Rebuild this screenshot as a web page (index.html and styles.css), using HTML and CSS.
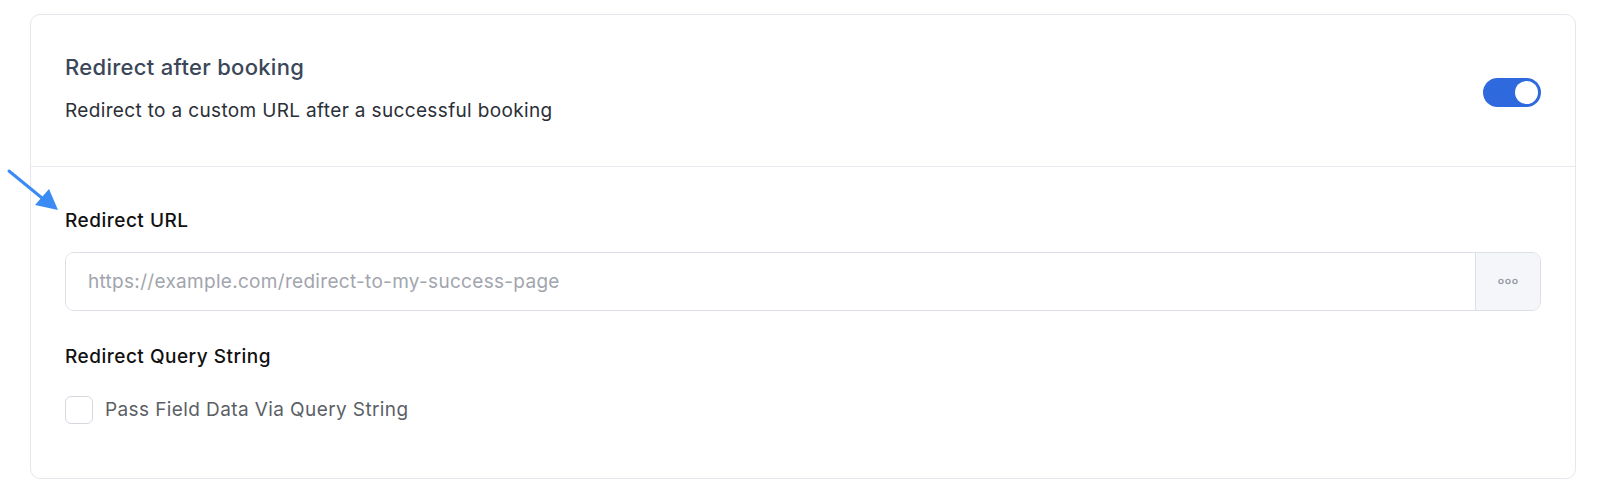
FILE: index.html
```html
<!DOCTYPE html>
<html lang="en">
<head>
    <meta charset="UTF-8">
    <meta name="viewport" content="width=device-width, initial-scale=1.0">
    <title>Redirect after booking</title>
    <link rel="stylesheet" href="styles.css">
</head>
<body>

    <svg class="pointer-arrow" width="70" height="60" viewBox="0 0 70 60">
        <line x1="9" y1="11" x2="42" y2="38" stroke="#3a8cf4" stroke-width="3" stroke-linecap="round"/>
        <polygon points="58,50 35,45 49,29" fill="#3a8cf4"/>
    </svg>

    <div class="card">
        <div class="card-head">
            <div>
                <h2 class="title">Redirect after booking</h2>
                <p class="subtitle">Redirect to a custom URL after a successful booking</p>
            </div>
            <label class="toggle">
                <input type="checkbox" checked>
                <span class="knob"></span>
            </label>
        </div>

        <div class="card-body">
            <div class="field-label">Redirect URL</div>
            <div class="url-group">
                <input class="url-input" type="text" placeholder="https://example.com/redirect-to-my-success-page">
                <button class="more-btn" type="button">
                    <svg width="22" height="7" viewBox="0 0 22 7">
                        <circle cx="4" cy="3.5" r="2.1" fill="none" stroke="#9a9ea8" stroke-width="1.4"/>
                        <circle cx="11" cy="3.5" r="2.1" fill="none" stroke="#9a9ea8" stroke-width="1.4"/>
                        <circle cx="18" cy="3.5" r="2.1" fill="none" stroke="#9a9ea8" stroke-width="1.4"/>
                    </svg>
                </button>
            </div>

            <div class="field-label query-label">Redirect Query String</div>
            <label class="check-row">
                <span class="check-box"></span>
                <span class="check-text">Pass Field Data Via Query String</span>
            </label>
        </div>
    </div>

</body>
</html>
```

FILE: styles.css
```css
body {
    margin: 0;
    font-family: Inter, "Noto Sans", sans-serif;
    background: #ffffff;
    color: #1b1d21;
}

.pointer-arrow {
    position: absolute;
    left: 0;
    top: 160px;
}

.card {
    margin: 14px 0 0 30px;
    width: 1546px;
    box-sizing: border-box;
    border: 1px solid #e5e7ec;
    border-radius: 10px;
}

.card-head {
    display: flex;
    justify-content: space-between;
    align-items: center;
    padding: 38px 34px 42px 34px;
    border-bottom: 1px solid #e8eaef;
}

.title {
    margin: 0;
    font-size: 22px;
    line-height: 28px;
    font-weight: 500;
    letter-spacing: 0.3px;
    color: #3b4759;
}

.subtitle {
    margin: 17px 0 0 0;
    font-size: 19px;
    line-height: 26px;
    letter-spacing: 0.35px;
    color: #2b2f37;
}

.toggle {
    position: relative;
    display: block;
    width: 58px;
    height: 29px;
    margin-top: 7px;
}

.toggle input {
    display: none;
}

.toggle .knob {
    position: absolute;
    inset: 0;
    border-radius: 15px;
    background: #2e6ade;
}

.toggle .knob::after {
    content: "";
    position: absolute;
    right: 3px;
    top: 3px;
    width: 23px;
    height: 23px;
    border-radius: 50%;
    background: #ffffff;
}

.card-body {
    padding: 42px 34px 54px 34px;
}

.field-label {
    font-size: 19px;
    line-height: 24px;
    font-weight: 500;
    letter-spacing: 0.5px;
    color: #111111;
}

.url-group {
    display: flex;
    margin-top: 19px;
    height: 59px;
    box-sizing: border-box;
    border: 1px solid #dcdfe6;
    border-radius: 9px;
    overflow: hidden;
}

.url-input {
    flex: 1;
    border: none;
    outline: none;
    padding: 0 22px;
    font-family: inherit;
    font-size: 19px;
    letter-spacing: 0.3px;
    color: #333;
}

.url-input::placeholder {
    color: #a2a5ad;
}

.more-btn {
    width: 65px;
    border: none;
    border-left: 1px solid #dcdfe6;
    background: #f5f6fa;
    display: flex;
    align-items: center;
    justify-content: center;
    padding: 0;
}

.query-label {
    margin-top: 34px;
}

.check-row {
    display: flex;
    align-items: center;
    gap: 12px;
    margin-top: 27px;
}

.check-box {
    width: 28px;
    height: 28px;
    box-sizing: border-box;
    border: 1px solid #d5d8df;
    border-radius: 6px;
    background: #ffffff;
}

.check-text {
    font-size: 19px;
    line-height: 26px;
    letter-spacing: 0.4px;
    color: #5c5f66;
}
```
